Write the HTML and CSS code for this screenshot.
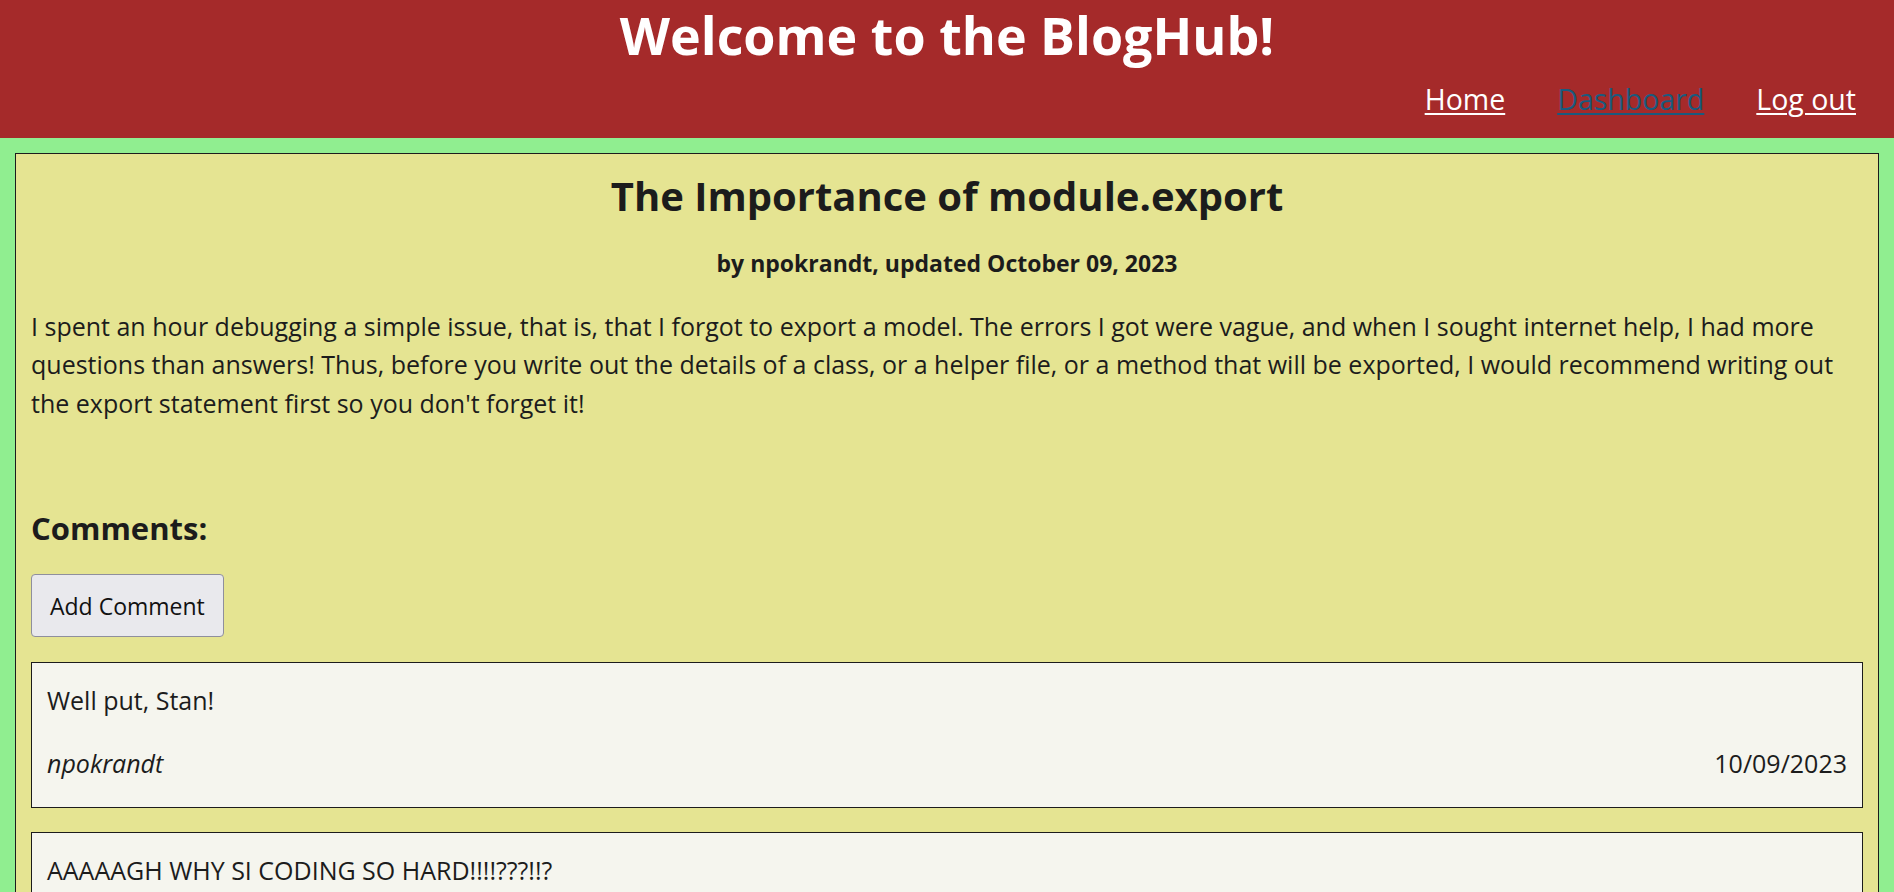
FILE: index.html
```html
<!DOCTYPE html>
<html lang="en">
<head>
<meta charset="utf-8">
<title>BlogHub</title>
<link rel="stylesheet" href="styles.css">
</head>
<body>
<header class="site-header">
  <h1 class="site-title">Welcome to the BlogHub!</h1>
  <nav class="site-nav">
    <a class="nav-link" href="#">Home</a>
    <a class="nav-link nav-link-active" href="#">Dashboard</a>
    <a class="nav-link" href="#">Log out</a>
  </nav>
</header>
<main class="page">
  <article class="post">
    <h2 class="post-title">The Importance of module.export</h2>
    <p class="post-meta">by npokrandt, updated October 09, 2023</p>
    <p class="post-body">I spent an hour debugging a simple issue, that is, that I forgot to export a model. The errors I got were vague, and when I sought internet help, I had more questions than answers! Thus, before you write out the details of a class, or a helper file, or a method that will be exported, I would recommend writing out the export statement first so you don't forget it!</p>

    <h3 class="comments-title">Comments:</h3>
    <button class="add-comment" type="button">Add Comment</button>

    <div class="comment">
      <p class="comment-text">Well put, Stan!</p>
      <div class="comment-footer">
        <span class="comment-author">npokrandt</span>
        <span class="comment-date">10/09/2023</span>
      </div>
    </div>

    <div class="comment">
      <p class="comment-text">AAAAAGH WHY SI CODING SO HARD!!!!???!!?</p>
      <div class="comment-footer">
        <span class="comment-author">npokrandt</span>
        <span class="comment-date">10/09/2023</span>
      </div>
    </div>
  </article>
</main>
</body>
</html>
```
FILE: styles.css
```css
* { box-sizing: border-box; }

html, body {
  margin: 0;
  padding: 0;
}

body {
  background: #90ee90;
  font-family: "Open Sans", sans-serif;
  color: #1c1c1c;
}

.site-header {
  background: #a52a2a;
  padding: 0 38px 20px 38px;
}

.site-title {
  margin: 0;
  font-size: 52px;
  line-height: 70px;
  font-weight: 700;
  color: #ffffff;
  text-align: center;
}

.site-nav {
  margin-top: 10px;
  display: flex;
  justify-content: flex-end;
  gap: 52px;
}

.nav-link {
  font-size: 28.5px;
  line-height: 38px;
  color: #ffffff;
  text-decoration: underline;
  text-decoration-thickness: 2px;
  text-underline-offset: 3px;
}

.nav-link-active {
  color: #1a5a7e;
}

.page {
  padding: 15px;
}

.post {
  background: #e5e492;
  border: 1px solid #1c1c1c;
  padding: 15px 15px 40px;
}

.post-title {
  margin: 0;
  font-size: 40px;
  line-height: 54px;
  font-weight: 700;
  text-align: center;
}

.post-meta {
  margin: 25px 0 0;
  font-size: 23px;
  line-height: 31px;
  font-weight: 700;
  text-align: center;
}

.post-body {
  margin: 28px 0 0;
  font-size: 25px;
  line-height: 38.4px;
}

.comments-title {
  margin: 85px 0 0;
  font-size: 31px;
  line-height: 42px;
  font-weight: 700;
}

.add-comment {
  display: block;
  margin-top: 25px;
  padding: 16px 18px 14px;
  font-family: "Open Sans", sans-serif;
  font-size: 23px;
  line-height: 31px;
  color: #111111;
  background: #e9e9ed;
  border: 1px solid #8f8f9d;
  border-radius: 4px;
}

.comment {
  margin-top: 25px;
  background: #f5f5ee;
  border: 1px solid #1c1c1c;
  padding: 18px 15px 25px;
}

.comment + .comment {
  margin-top: 24px;
}

.comment-text {
  margin: 0;
  font-size: 25px;
  line-height: 38.4px;
}

.comment-footer {
  margin-top: 24px;
  display: flex;
  justify-content: space-between;
  align-items: baseline;
  font-size: 25px;
  line-height: 38.4px;
}

.comment-author {
  font-style: italic;
}
```
